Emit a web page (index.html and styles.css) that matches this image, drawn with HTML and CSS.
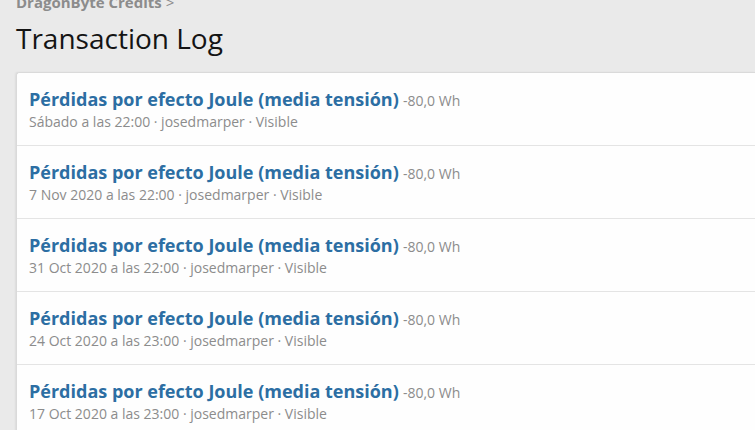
FILE: index.html
```html
<!DOCTYPE html>
<html lang="es">
<head>
    <meta charset="UTF-8">
    <title>Transaction Log</title>
    <link rel="stylesheet" href="styles.css">
</head>
<body>
    <div class="page">
        <div class="breadcrumb">DragonByte Credits <span class="chev">&gt;</span></div>
        <h1 class="title">Transaction Log</h1>
        <div class="block">
            <div class="row">
                <div class="row-head"><a class="row-title">Pérdidas por efecto Joule (media tensión)</a> <span class="amount">-80,0 Wh</span></div>
                <div class="meta">Sábado a las 22:00 · josedmarper · Visible</div>
            </div>
            <div class="row">
                <div class="row-head"><a class="row-title">Pérdidas por efecto Joule (media tensión)</a> <span class="amount">-80,0 Wh</span></div>
                <div class="meta">7 Nov 2020 a las 22:00 · josedmarper · Visible</div>
            </div>
            <div class="row">
                <div class="row-head"><a class="row-title">Pérdidas por efecto Joule (media tensión)</a> <span class="amount">-80,0 Wh</span></div>
                <div class="meta">31 Oct 2020 a las 22:00 · josedmarper · Visible</div>
            </div>
            <div class="row">
                <div class="row-head"><a class="row-title">Pérdidas por efecto Joule (media tensión)</a> <span class="amount">-80,0 Wh</span></div>
                <div class="meta">24 Oct 2020 a las 23:00 · josedmarper · Visible</div>
            </div>
            <div class="row">
                <div class="row-head"><a class="row-title">Pérdidas por efecto Joule (media tensión)</a> <span class="amount">-80,0 Wh</span></div>
                <div class="meta">17 Oct 2020 a las 23:00 · josedmarper · Visible</div>
            </div>
        </div>
    </div>
</body>
</html>
```

FILE: styles.css
```css
body {
    margin: 0;
    background-color: #eaeaea;
    font-family: "Open Sans", "Noto Sans", sans-serif;
    color: #141414;
    overflow: hidden;
}

.page {
    padding: 0 0 0 16px;
    margin-top: -8px;
}

.breadcrumb {
    font-size: 15px;
    font-weight: bold;
    color: #8c8c8c;
    line-height: 20px;
}

.chev {
    font-weight: normal;
}

.title {
    font-size: 28px;
    font-weight: normal;
    margin: 7px 0 15px;
    line-height: 38px;
}

.block {
    background-color: #fefefe;
    border: 1px solid #dadada;
    border-right: 0;
    border-radius: 3px 0 0 3px;
    box-shadow: -1px 0 2px rgba(0, 0, 0, 0.06);
}

.row {
    padding: 14px 12px 16px;
    border-top: 1px solid #e4e4e4;
    height: 42px;
}

.row:first-child {
    border-top: 0;
}

.row-head {
    line-height: 24px;
}

.row-title {
    font-size: 18px;
    font-weight: bold;
    color: #2c6ea3;
    text-decoration: none;
}

.amount {
    font-size: 14px;
    color: #8c8c8c;
}

.meta {
    font-size: 14px;
    color: #8c8c8c;
    line-height: 18px;
}
```
